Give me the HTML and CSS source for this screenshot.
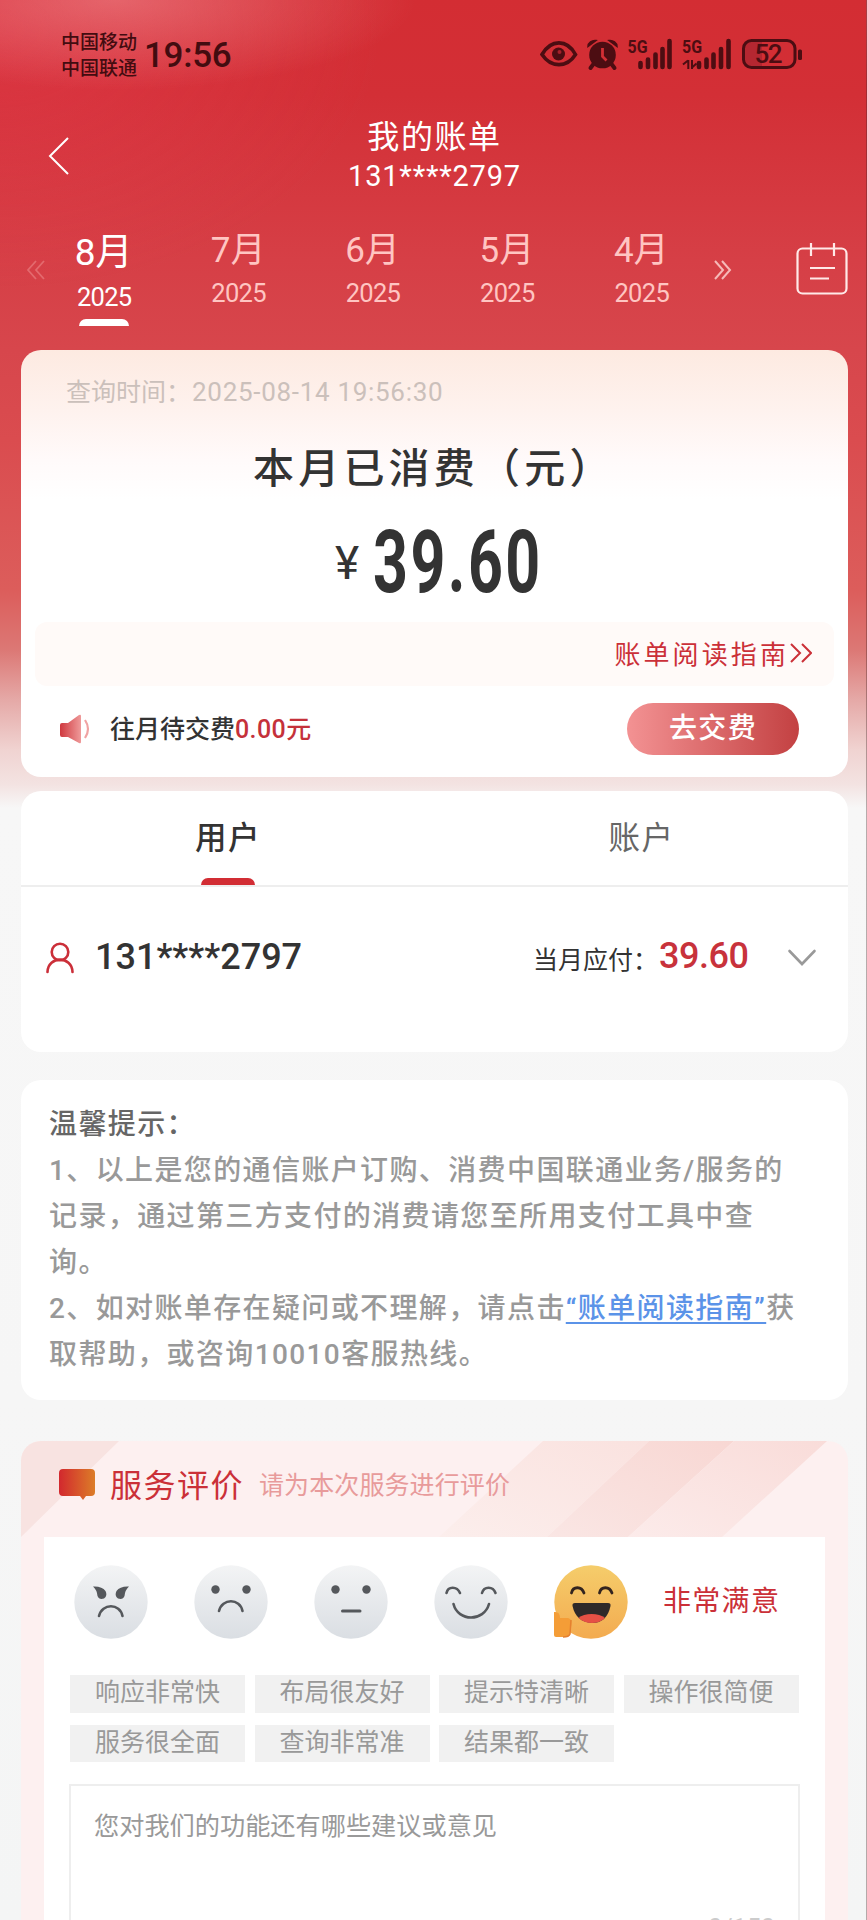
FILE: index.html
```html
<!DOCTYPE html>
<html lang="zh-CN">
<head>
<meta charset="utf-8">
<title>我的账单</title>
<link rel="stylesheet" href="styles.css">
</head>
<body>
<div class="screen">
  <div class="status">
    <div class="carriers"><span>中国移动</span><span>中国联通</span></div>
    <div class="clock">19:56</div>
    <svg class="status-icons" width="266" height="36" viewBox="0 0 266 36">
      <g fill="none" stroke="#4c0d12" stroke-width="3.6">
        <path d="M3 18.500C12 3 28 3 36.500 18.500C28 32 12 32 3 18.500Z"/>
      </g>
      <circle cx="19.500" cy="18" r="6.500" fill="#4c0d12"/><circle cx="20.500" cy="16" r="2" fill="#a5202a"/>
      <g fill="#4c0d12">
        <circle cx="63.500" cy="19" r="13.300"/>
        <path d="M49 10.500C49 6.500 53 4 57 4.500ZM78 10.500C78 6.500 74 4 70 4.500Z" stroke="#4c0d12" stroke-width="1.500"/>
        <path d="M54.500 28l-3 4M72.500 28l3 4" stroke="#4c0d12" stroke-width="4" stroke-linecap="round"/>
      </g>
      <path d="M63.500 12v8.500l4 4" fill="none" stroke="#d22f35" stroke-width="2.800"/>
      <g font-family="Roboto, sans-serif" font-weight="700" font-size="19" fill="#4c0d12">
        <text x="88.500" y="17" textLength="20" lengthAdjust="spacingAndGlyphs">5G</text>
        <text x="143" y="17" textLength="20" lengthAdjust="spacingAndGlyphs">5G</text>
      </g>
      <g stroke="#4c0d12" stroke-width="4.600" stroke-linecap="round">
        <path d="M101.500 27v4M109 23.500v7.500M116.500 18.500v12.500M123.500 13v18M130.500 5v26"/>
        <path d="M160 27v4M167.500 23.500v7.500M174.500 18.500v12.500M182 13v18M189.500 5v26"/>
      </g>
      <path d="M149.300 24v9M144 28.500l5-4M153 33v-9M153 31.500l4.500-4" fill="none" stroke="#4c0d12" stroke-width="2"/>
      <path d="M212 4.500h11v26h-11q-7-1-7-7v-12q0-6 7-7Z" fill="#b52731"/>
      <rect x="204.500" y="4.500" width="51.500" height="27" rx="8" fill="none" stroke="#4c0d12" stroke-width="3"/>
      <rect x="259" y="13.500" width="4" height="10.500" rx="1.500" fill="#4c0d12"/>
      <text x="215.500" y="27" font-family="Roboto, sans-serif" font-weight="500" font-size="26" fill="#4c0d12" textLength="28">52</text>
    </svg>
  </div>

  <header class="nav">
    <svg class="back" width="24" height="40" viewBox="0 0 24 40"><path d="M21 2L3 20L21 38" fill="none" stroke="#fff" stroke-width="2"/></svg>
    <div class="nav-title"><h1>我的账单</h1><div class="nav-phone">131****2797</div></div>
  </header>

  <nav class="months">
    <svg class="prev" width="20" height="20" viewBox="0 0 20 20"><path d="M10 1L2 10L10 19M18 1L10 10L18 19" fill="none" stroke="#e36a6e" stroke-width="1.800"/></svg>
    <div class="month-list">
      <div class="month active"><b>8月</b><span>2025</span></div>
      <div class="month"><b>7月</b><span>2025</span></div>
      <div class="month"><b>6月</b><span>2025</span></div>
      <div class="month"><b>5月</b><span>2025</span></div>
      <div class="month"><b>4月</b><span>2025</span></div>
    </div>
    <svg class="next" width="20" height="20" viewBox="0 0 20 20"><path d="M2 1L10 10L2 19M9 1L17 10L9 19" fill="none" stroke="#f6b9b8" stroke-width="2"/></svg>
    <svg class="calendar" width="52" height="52" viewBox="0 0 52 52"><g fill="none" stroke="#ffe9e8" stroke-width="2.200"><rect x="1.500" y="5.500" width="49" height="45" rx="5"/><path d="M15 0v13M38 0v13M14 25h25M14 35.500h19"/></g></svg>
  </nav>

  <section class="bill">
    <div class="query-time">查询时间：<span>2025-08-14 19:56:30</span></div>
    <h2>本月已消费（元）</h2>
    <div class="amount"><span class="yen">¥</span><span class="num">39.60</span></div>
    <div class="guide"><span>账单阅读指南</span><svg width="22" height="20" viewBox="0 0 22 20"><path d="M1 1L10 10L1 19M12 1L21 10L12 19" fill="none" stroke="#cb3038" stroke-width="2"/></svg></div>
    <div class="pay">
      <svg width="32" height="32" viewBox="0 0 32 32">
        <defs><linearGradient id="horn"><stop offset="0" stop-color="#cf383e"/><stop offset="1" stop-color="#ef9a9a"/></linearGradient></defs>
        <path d="M3 10H9L20 2Q22 1 22 3V29Q22 31 20 30L9 24H3Q1 24 1 22V12Q1 10 3 10Z" fill="url(#horn)"/>
        <path d="M26 7Q32 16 26 25" fill="none" stroke="#f0a3a3" stroke-width="2.200"/>
      </svg>
      <p>往月待交费<em>0.00元</em></p>
      <button class="pay-btn">去交费</button>
    </div>
  </section>

  <section class="users">
    <div class="tabs"><div class="tab on">用户</div><div class="tab">账户</div></div>
    <div class="user-row">
      <svg width="30" height="32" viewBox="0 0 30 32"><g fill="none" stroke="#cb2f39" stroke-width="2.600" stroke-linecap="round"><circle cx="15" cy="10" r="8.300"/><path d="M2.500 30C3 13.500 27 13.500 27.500 30"/></g></svg>
      <div class="user-phone">131****2797</div>
      <div class="due">当月应付：</div>
      <div class="due-num">39.60</div>
      <svg class="fold" width="30" height="18" viewBox="0 0 30 18"><path d="M2.500 2L15 15L27.500 2" fill="none" stroke="#999" stroke-width="2.600" stroke-linecap="round"/></svg>
    </div>
  </section>

  <section class="tips">
    <h3>温馨提示：</h3>
    <p>1、以上是您的通信账户订购、消费中国联通业务/服务的<br>记录，通过第三方支付的消费请您至所用支付工具中查<br>询。</p>
    <p>2、如对账单存在疑问或不理解，请点击<a>“账单阅读指南”</a>获<br>取帮助，或咨询10010客服热线。</p>
  </section>

  <section class="rating">
    <div class="rating-head">
      <svg class="stripes" width="827" height="96" viewBox="0 0 827 96">
        <defs>
          <linearGradient id="s1" x1="0" y1="1" x2="1" y2="0"><stop offset="0" stop-color="#fceeec"/><stop offset="1" stop-color="#fae2df"/></linearGradient>
          <linearGradient id="s2" x1="0" y1="1" x2="1" y2="0"><stop offset="0" stop-color="#fae6e4"/><stop offset="1" stop-color="#f8d7d3"/></linearGradient>
          <linearGradient id="s3" x1="0" y1="1" x2="1" y2="0"><stop offset="0" stop-color="#fcebea"/><stop offset="1" stop-color="#f9dcd9"/></linearGradient>
        </defs>
        <path d="M0 0H98L0 96Z" fill="#f8e3e1"/>
        <path d="M522 0H628L526 96H418Z" fill="url(#s1)"/>
        <path d="M628 0H713L607 96H526Z" fill="url(#s2)"/>
        <path d="M713 0H806L701 96H607Z" fill="url(#s3)"/>
      </svg>
      <svg width="36" height="32" viewBox="0 0 36 32"><defs><linearGradient id="bub"><stop offset="0" stop-color="#d2282e"/><stop offset="1" stop-color="#dc7d28"/></linearGradient></defs><path d="M4 1H32Q36 1 36 5V24Q36 28 32 28H27L24 32L21 28H4Q0 28 0 24V5Q0 1 4 1Z" fill="url(#bub)"/></svg>
      <h3>服务评价</h3><span>请为本次服务进行评价</span>
    </div>
    <div class="rating-body">
      <svg width="0" height="0" class="defs"><defs>
        <linearGradient id="gray" x1="0" y1="0" x2="0" y2="1"><stop offset="0" stop-color="#f3f4f5"/><stop offset="1" stop-color="#dadee3"/></linearGradient>
        <linearGradient id="gold" x1="0" y1="0" x2="0" y2="1"><stop offset="0" stop-color="#f5cd6b"/><stop offset="1" stop-color="#f3ab50"/></linearGradient>
      </defs></svg>
      <div class="faces">
        <svg viewBox="0 0 74 74"><circle cx="37" cy="37" r="36.700" fill="url(#gray)"/><g fill="#55585c"><path d="M19 21.500Q28 21 31.500 26Q34 31 30 33.500Q25 35 23.500 31Q23 25 19 21.500ZM55 21.500Q46 21 42.500 26Q40 31 44 33.500Q49 35 50.500 31Q51 25 55 21.500Z"/></g><path d="M25 51C28 38 46 38 48.500 51" fill="none" stroke="#55585c" stroke-width="2.600" stroke-linecap="round"/></svg>
        <svg viewBox="0 0 74 74"><circle cx="37" cy="37" r="36.700" fill="url(#gray)"/><circle cx="21.500" cy="24.500" r="4.200" fill="#55585c"/><circle cx="52.500" cy="24.500" r="4.200" fill="#55585c"/><path d="M25 46C28 33 46 33 48.500 46" fill="none" stroke="#55585c" stroke-width="2.600" stroke-linecap="round"/></svg>
        <svg viewBox="0 0 74 74"><circle cx="37" cy="37" r="36.700" fill="url(#gray)"/><circle cx="21.500" cy="24.500" r="4.200" fill="#55585c"/><circle cx="52.500" cy="24.500" r="4.200" fill="#55585c"/><path d="M28.500 46H46" stroke="#55585c" stroke-width="3" stroke-linecap="round"/></svg>
        <svg viewBox="0 0 74 74"><circle cx="37" cy="37" r="36.700" fill="url(#gray)"/><g fill="none" stroke="#55585c" stroke-width="2.600" stroke-linecap="round"><path d="M12.500 28C14 21 23 21 26 28M48 28C50 21 59 21 61.500 28M19.500 39C24 57 50 57 55 39"/></g></svg>
        <svg viewBox="0 0 74 74"><circle cx="37" cy="37" r="36.700" fill="url(#gold)"/><g fill="none" stroke="#33241f" stroke-width="2.800" stroke-linecap="round"><path d="M17.500 28C19 21 27.500 21 30 28M45.500 28C47 21 55.500 21 58 28"/></g><path d="M21 38H54Q57 38 56.500 41Q53 58 38 58Q22 57 18.500 41Q18 38 21 38Z" fill="#2f2929"/><path d="M24.500 53C30 47.500 45 47.500 51 53Q46 58 38 58Q30 58 24.500 53Z" fill="#e65045"/><path d="M0 47Q6 46 6 53H14Q18 54 17.500 59L16 69Q15 72 11 72H2Q0 72 0 70Z" fill="#f49d37"/><path d="M17 55L16 69Q15 72 9 72" fill="none" stroke="#e58030" stroke-width="1.500"/></svg>
        <span>非常满意</span>
      </div>
      <div class="tags">
        <span>响应非常快</span><span>布局很友好</span><span>提示特清晰</span><span>操作很简便</span>
        <span>服务很全面</span><span>查询非常准</span><span>结果都一致</span>
      </div>
      <div class="opinion"><div>您对我们的功能还有哪些建议或意见</div><div class="count">0/150</div></div>
    </div>
  </section>
</div>
</body>
</html>
```

FILE: styles.css
```css
* { box-sizing: border-box; margin: 0; padding: 0; }
html { height: 1920px; overflow: hidden; }
body { height: 1920px; overflow: hidden; font-family: Roboto, "Noto Sans CJK SC", sans-serif; }
h1, h2, h3, b, em { font-weight: 400; font-style: normal; }
svg { display: block; flex: none; }

.screen {
  width: 867px; height: 1920px; overflow: hidden; padding: 0 18px 0 21px;
  border-right: 1px solid rgba(60, 30, 30, .35);
  background:
    radial-gradient(ellipse 300px 90px at 115px 0, rgba(240, 140, 145, .55), rgba(240, 100, 115, 0)),
    radial-gradient(ellipse 380px 260px at 0 30px, rgba(230, 65, 85, .4), rgba(230, 60, 85, 0)),
    linear-gradient(180deg, #d32d33 0, #d32f36 95px, #d63f46 260px, #d7464c 350px, #da4c4f 440px, #dc5d5b 590px, #dc7875 650px, #e5a9a7 700px, #f0d3d1 750px, #f3e3e2 785px, #f7f7f7 808px, #f6f6f6 1400px, #f4f5f5 1920px);
}

.status { display: flex; height: 108px; padding-left: 40px; align-items: flex-start; color: #430c10; }
.carriers { display: flex; flex-direction: column; margin-top: 30px; font-size: 19px; line-height: 26px; font-weight: 500; }
.clock { margin: 36px 0 0 7px; width: 100px; font-size: 35px; line-height: 40px; font-weight: 500; letter-spacing: -.3px; }
.status-icons { margin: 36px 0 0 295px; }

.nav { display: flex; height: 110px; }
.back { margin: 28px 0 0 26px; }
.nav-title { width: 727px; color: #fff; text-align: center; }
.nav-title h1 { margin-top: 7px; font-size: 32px; line-height: 45px; letter-spacing: 1.6px; }
.nav-phone { font-size: 29px; line-height: 32px; letter-spacing: .8px; }

.months { display: flex; height: 132px; padding-left: 5px; color: #ffc5c2; }
.prev { margin-top: 42px; }
.month-list { display: flex; margin-left: -9px; }
.month { width: 134.400px; display: flex; flex-direction: column; align-items: center; }
.month b { margin: 8px 1px 0 0; font-size: 35px; line-height: 50px; }
.month span { margin-top: 3px; font-size: 25.500px; line-height: 29px; letter-spacing: -.7px; }
.month.active { color: #fff; }
.month.active b { font-size: 37px; line-height: 54px; }
.month.active::after { content: ""; width: 50px; height: 7px; margin-top: 7px; border-radius: 7px 7px 0 0; background: #fff; }
.next { margin: 42px 0 0 4px; }
.calendar { margin: 25px 0 0 63px; }

.bill { height: 427px; border-radius: 20px; overflow: hidden; background: linear-gradient(180deg, #fdeae1 0, #fef2ee 60px, #fffafa 110px, #fff 150px); }
.query-time { height: 57px; padding: 26px 0 0 45px; font-size: 25px; line-height: 32px; color: #cbc0bb; white-space: nowrap; }
.query-time span { font-size: 26px; letter-spacing: .7px; margin-left: 1px; }
.bill h2 { height: 60px; margin-top: 32px; padding-left: 232px; font-size: 41px; line-height: 60px; letter-spacing: 4.200px; color: #333; font-weight: 500; white-space: nowrap; }
.amount { display: flex; height: 123px; color: #333; }
.yen { margin: 34px 0 0 314px; width: 38px; font-size: 46px; line-height: 60px; font-weight: 400; }
.num { margin-top: 16px; font-size: 87px; line-height: 94px; font-weight: 700; letter-spacing: 3.500px; transform: scaleX(.7); transform-origin: 0 0; }
.guide { display: flex; align-items: center; height: 64px; margin: 0 14px; padding: 0 22px 3px 0; justify-content: flex-end; gap: 1px; border-radius: 12px; background: #fffaf8; color: #cb3038; font-size: 26px; letter-spacing: 3.100px; }
.pay { display: flex; align-items: center; padding: 17px 49px 0 38px; }
.pay p { margin: 1px 0 0 19px; font-size: 25px; line-height: 40px; color: #333; font-weight: 500; }
.pay em { color: #c5313a; letter-spacing: .4px; font-weight: 500; }
.pay-btn { margin-left: auto; width: 172px; height: 52px; border: 0; border-radius: 26px; background: linear-gradient(90deg, #f39293, #c34142); color: #fff; font: 500 28px/52px Roboto, "Noto Sans CJK SC", sans-serif; letter-spacing: 1.300px; }

.users { height: 261px; margin-top: 14px; border-radius: 20px; background: #fff; }
.tabs { display: flex; height: 96px; border-bottom: 2px solid #eee; }
.tab { position: relative; flex: 1; padding-left: 174px; font-size: 31.500px; line-height: 96px; letter-spacing: 1.500px; color: #666; }
.tab.on { color: #333; font-weight: 500; }
.tab.on::after { content: ""; position: absolute; left: 180px; bottom: 0; width: 54px; height: 7px; border-radius: 7px 7px 0 0; background: #d22d34; }
.user-row { display: flex; align-items: center; height: 142px; padding-left: 24px; }
.user-phone { margin: -2px 0 0 20px; width: 438px; font-size: 36px; font-weight: 500; color: #333; }
.due { width: 126px; font-size: 25px; color: #333; }
.due-num { width: 128px; font-size: 36px; line-height: 40px; margin-top: -5px; font-weight: 500; color: #c8323b; letter-spacing: -.5px; }
.fold { margin-left: 0; }

.tips { height: 320px; margin-top: 28px; padding: 22px 28px 0; border-radius: 20px; background: #fff; font-size: 28px; line-height: 46px; letter-spacing: 1.380px; white-space: nowrap; color: #999; font-weight: 500; }
.tips h3 { font-size: 28px; font-weight: 500; color: #666; }
.tips a { color: #5b93e8; text-decoration: underline; text-underline-offset: 4px; text-decoration-thickness: 2px; }

.rating { height: 700px; margin-top: 41px; padding: 0 23px; border-radius: 20px 20px 0 0; overflow: hidden; background: #fdf0f0; }
.rating-head { position: relative; display: flex; align-items: center; height: 96px; padding: 0 0 11px 15px; color: #cb3038; }
.stripes { position: absolute; left: -23px; top: 0; }
.rating-head svg, .rating-head h3, .rating-head span { z-index: 1; }
.rating-head .stripes { z-index: 0; }
.rating-head h3 { margin: -2px 0 0 15px; font-size: 32px; letter-spacing: 1.500px; }
.rating-head span { margin: -2px 0 0 15px; font-size: 25px; color: #e89b9b; letter-spacing: .1px; }
.rating-body { height: 600px; padding: 0 25px; background: #fff; }
.defs { position: absolute; }
.faces { display: flex; padding: 28px 0 0 5px; gap: 46px; align-items: center; height: 102px; }
.faces svg { width: 74px; height: 74px; }
.faces span { margin: -1px 0 0 -11px; color: #cb3038; font-size: 28px; letter-spacing: 1.300px; white-space: nowrap; line-height: 40px; }
.tags { display: grid; grid-template-columns: repeat(4, 175px); column-gap: 9.500px; row-gap: 12px; margin: 36px 0 0 1px; }
.tags span { height: 37.500px; background: #f1f1f1; color: #999; text-align: center; font-size: 25px; line-height: 36px; }
.opinion { width: 731px; height: 200px; margin-top: 22px; border: 2px solid #eee; padding: 23px; font-size: 25.200px; line-height: 36px; color: #999; }
.count { margin-top: 66px; text-align: right; color: #ccc; }
```
